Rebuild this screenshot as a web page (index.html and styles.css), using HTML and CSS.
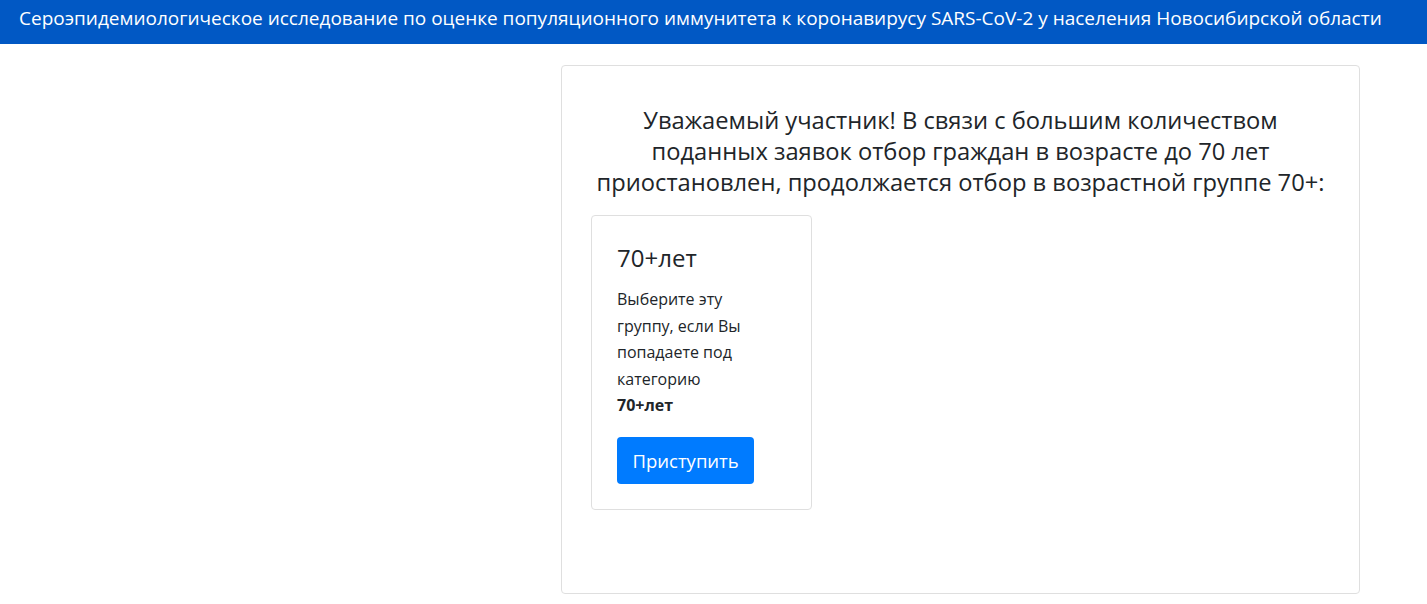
FILE: index.html
```html
<!DOCTYPE html>
<html lang="ru">
<head>
  <meta charset="UTF-8">
  <meta name="viewport" content="width=device-width, initial-scale=1.0">
  <title>Сероэпидемиологическое исследование</title>
  <link rel="stylesheet" href="styles.css">
</head>
<body>
  <!-- Top bar -->
  <header class="topbar">
    Сероэпидемиологическое исследование по оценке популяционного иммунитета к коронавирусу SARS-CoV-2 у населения Новосибирской области
  </header>

  <div class="layout">
    <div class="side"></div>

    <!-- Main card -->
    <main class="card main-card">
      <h4 class="notice">
        Уважаемый участник! В связи с большим количеством<br>
        поданных заявок отбор граждан в возрасте до 70 лет<br>
        приостановлен, продолжается отбор в возрастной группе 70+:
      </h4>

      <div class="groups">
        <div class="card group">
          <h5 class="group-title">70+лет</h5>
          <p class="group-text">Выберите эту группу, если Вы попадаете под категорию <b>70+лет</b></p>
          <button class="btn">Приступить</button>
        </div>
      </div>
    </main>
  </div>
</body>
</html>
```

FILE: styles.css
```css
body {
  margin: 0;
  font-family: 'Open Sans', 'Noto Sans', sans-serif;
  color: #212529;
  background-color: #fff;
}
/* Blue header strip */
.topbar {
  background-color: #0158c4;
  color: #fff;
  font-size: 19px;
  height: 44px;
  line-height: 36px;
  padding: 0 19px;
  white-space: nowrap;
  overflow: hidden;
}
.layout {
  display: flex;
  padding-top: 21px;
}
.side {
  width: 561px;
  flex-shrink: 0;
}
.card {
  border: 1px solid #dfdfdf;
  border-radius: 4px;
  background-color: #fff;
  box-sizing: border-box;
}
.main-card {
  width: 799px;
  height: 529px;
  padding: 39px 29px 0;
}
.notice {
  margin: 0 0 17px;
  font-size: 23.7px;
  font-weight: normal;
  line-height: 31px;
  text-align: center;
}
.groups {
  display: flex;
}
.group {
  width: 221px;
  padding: 25px 25px 25px;
}
.group-title {
  margin: 4px 0 15px;
  font-size: 24px;
  font-weight: normal;
  line-height: 26px;
}
.group-text {
  max-width: 128px;
  margin: 0 0 18px;
  font-size: 16px;
  line-height: 26.5px;
}
.btn {
  background-color: #007bff;
  color: #fff;
  border: none;
  border-radius: 4px;
  font-family: inherit;
  font-size: 18.5px;
  padding: 0 15.5px;
  height: 47px;
  cursor: pointer;
}
```
